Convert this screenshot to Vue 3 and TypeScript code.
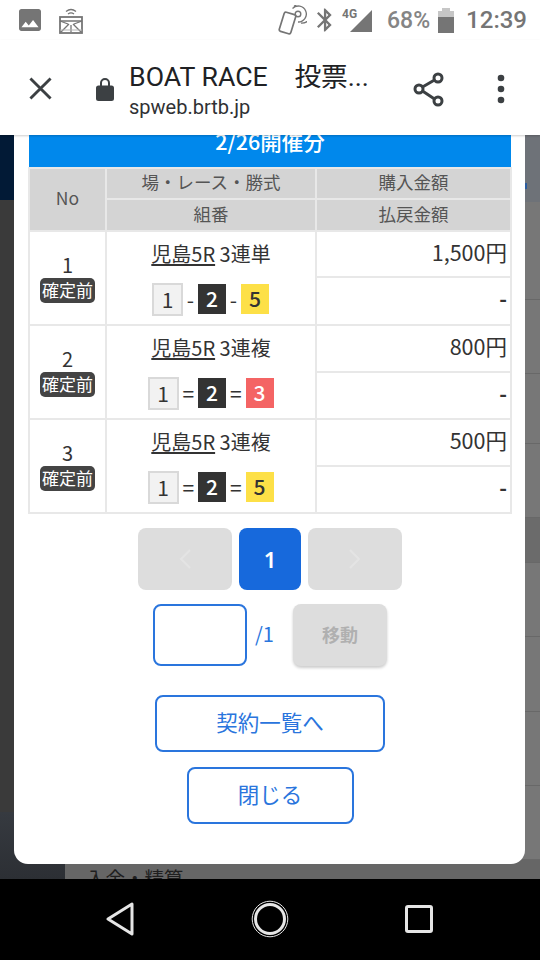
<script setup lang="ts">
interface Bet {
  no: number
  type: string
  sep: string
  last: number
  amount: string
}
const bets: Bet[] = [
  { no: 1, type: '3連単', sep: '-', last: 5, amount: '1,500円' },
  { no: 2, type: '3連複', sep: '=', last: 3, amount: '800円' },
  { no: 3, type: '3連複', sep: '=', last: 5, amount: '500円' },
]
const bgRows = [98, 74, 70, 74, 45, 74, 75, 74, 74]
</script>

<template>
  <div class="screen">
    <header class="status">
      <div class="status-left">
        <svg class="ic-pic" viewBox="3 3 18 18"><path fill="#757575" d="M21 19V5c0-1.1-.9-2-2-2H5c-1.100 0-2 .9-2 2v14c0 1.100.9 2 2 2h14c1.100 0 2-.9 2-2zM8.500 13.500l2.500 3.010L14.500 12l4.500 6H5l3.500-4.500z"/></svg>
        <svg class="ic-cast" viewBox="0 0 24 27" fill="none" stroke="#757575">
          <path d="M7 4.500c3-2.400 7-2.400 10 0M9 7c2-1.500 4-1.500 6 0" stroke-width="1.300"/>
          <rect x="1" y="10" width="22" height="16" stroke-width="1.800"/>
          <path d="M1 14h22" stroke-width="1.500"/>
          <path d="M1 14l8 3M23 14l-8 3M2 25l8-8M22 25l-8-8M12 18v7" stroke-width="1.300"/>
          <path d="M1 23h22" stroke="#b5b5b5" stroke-width="1"/>
        </svg>
      </div>
      <div class="status-right">
        <svg class="ic-nfc" viewBox="0 0 30 30" fill="none" stroke="#757575">
          <rect x="4.500" y="8" width="12" height="20" rx="1.800" transform="rotate(17 10.500 18)" stroke-width="1.700"/>
          <circle cx="21" cy="9" r="2.800" stroke-width="1.400"/>
          <path d="M15.500 3.500A8 8 0 1 1 21 17M17 1.700A10 10 0 1 1 24 18" stroke-width="1.300"/>
        </svg>
        <svg class="ic-bt" viewBox="5 2 13 20"><path fill="#757575" d="M17.710 7.710L12 2h-1v7.590L6.410 5 5 6.410 10.590 12 5 17.590 6.410 19 11 14.410V22h1l5.710-5.710-4.300-4.290 4.300-4.290zM13 5.830l1.880 1.880L13 9.590V5.830zm1.880 10.460L13 18.170v-3.760l1.880 1.880z"/></svg>
        <div class="signal">
          <span class="four-g">4G</span>
          <svg class="ic-signal" viewBox="0 0 22 22"><path fill="#757575" d="M22 0v22H0z"/></svg>
        </div>
        <span class="pct">68%</span>
        <div class="battery"><i class="cap"></i><i class="empty"></i><i class="full"></i></div>
        <span class="clock">12:39</span>
      </div>
    </header>

    <nav class="toolbar">
      <svg class="ic-close" viewBox="0 0 24 24"><path d="M1.500 1.500l21 21M22.500 1.500l-21 21" stroke="#3c4043" stroke-width="3" fill="none"/></svg>
      <svg class="ic-lock" viewBox="0 0 18 24"><path fill="#3c4043" d="M2.500 8.500H4V6a5 5 0 0 1 10 0v2.500h1.500A2.500 2.500 0 0 1 18 11v10.500a2.500 2.500 0 0 1-2.500 2.500h-13A2.500 2.500 0 0 1 0 21.500V11a2.500 2.500 0 0 1 2.500-2.500zM6 8.500h6V6a3 3 0 0 0-6 0z"/></svg>
      <div class="title">
        <div class="title-main">BOAT RACE　投票...</div>
        <div class="title-url">spweb.brtb.jp</div>
      </div>
      <svg class="ic-share" viewBox="0 0 34 36" fill="none" stroke="#3c4043" stroke-width="3">
        <circle cx="26" cy="7" r="4"/>
        <circle cx="7" cy="18" r="4"/>
        <circle cx="26" cy="30" r="4"/>
        <path d="M10.500 16l12-7M10.500 20l12 8"/>
      </svg>
      <svg class="ic-more" viewBox="0 0 8 30"><g fill="#3c4043"><circle cx="4" cy="4" r="3.300"/><circle cx="4" cy="15" r="3.300"/><circle cx="4" cy="26" r="3.300"/></g></svg>
    </nav>

    <main class="web">
      <div class="backdrop">
        <aside class="rail">
          <div class="rail-top"></div>
          <div class="rail-mid"></div>
          <div class="rail-bot"></div>
        </aside>
        <div class="page">
          <div class="page-head"><i class="page-dot"></i></div>
          <div v-for="(h, i) in bgRows" :key="i" class="page-row" :class="{ dim: i === 4 }" :style="{ height: h + 'px' }"></div>
          <div class="page-last">入金・精算</div>
        </div>
      </div>

      <section class="modal">
        <div class="banner">2/26開催分</div>
        <table class="bets">
          <colgroup><col class="c1" /><col class="c2" /><col class="c3" /></colgroup>
          <thead>
            <tr class="h1">
              <th rowspan="2">No</th>
              <th>場・レース・勝式</th>
              <th>購入金額</th>
            </tr>
            <tr class="h2">
              <th>組番</th>
              <th>払戻金額</th>
            </tr>
          </thead>
          <tbody v-for="b in bets" :key="b.no">
            <tr :class="b.no === 1 ? 'r46' : 'r47'">
              <td rowspan="2" class="no">
                <div class="no-num">{{ b.no }}</div>
                <span class="badge">確定前</span>
              </td>
              <td rowspan="2" class="combo">
                <div class="race"><u>児島5R</u> {{ b.type }}</div>
                <div class="boxes" :class="{ wide: b.sep === '=' }">
                  <span class="box white">1</span>
                  <span class="sep">{{ b.sep }}</span>
                  <span class="box black">2</span>
                  <span class="sep">{{ b.sep }}</span>
                  <span class="box" :class="b.last === 5 ? 'yellow' : 'red'">{{ b.last }}</span>
                </div>
              </td>
              <td class="amt">{{ b.amount }}</td>
            </tr>
            <tr :class="b.no === 1 ? 'r48' : 'r47'">
              <td class="amt dash">-</td>
            </tr>
          </tbody>
        </table>

        <div class="pager">
          <button class="pg side" aria-label="前へ">
            <svg class="chev" viewBox="0 0 12 20"><path d="M11 1L2 10l9 9" fill="none" stroke="#e4e4e4" stroke-width="2"/></svg>
          </button>
          <button class="pg current">1</button>
          <button class="pg side" aria-label="次へ">
            <svg class="chev" viewBox="0 0 12 20"><path d="M1 1l9 9-9 9" fill="none" stroke="#e4e4e4" stroke-width="2"/></svg>
          </button>
        </div>

        <div class="jump">
          <input class="jump-input" type="text" />
          <span class="jump-total">/1</span>
          <button class="jump-btn">移動</button>
        </div>

        <button class="outline list">契約一覧へ</button>
        <button class="outline close">閉じる</button>
      </section>
    </main>

    <footer class="navbar">
      <svg class="nav-back" viewBox="0 0 28 34"><path d="M26 2v30L2 17z" fill="none" stroke="#e6e6e6" stroke-width="3" stroke-linejoin="round"/></svg>
      <svg class="nav-home" viewBox="0 0 38 38" fill="none">
        <circle cx="19" cy="19" r="17.800" stroke="#e6e6e6" stroke-width="1"/>
        <circle cx="19" cy="19" r="14.500" stroke="#e6e6e6" stroke-width="3"/>
      </svg>
      <svg class="nav-recent" viewBox="0 0 28 28"><rect x="1.500" y="1.500" width="25" height="25" rx="1.500" fill="none" stroke="#e6e6e6" stroke-width="3"/></svg>
    </footer>
  </div>
</template>

<style scoped>
.screen {
  width: 540px;
  height: 960px;
  display: flex;
  flex-direction: column;
  overflow: hidden;
  font-family: "Noto Sans CJK JP", "Noto Sans", sans-serif;
  color: #333;
}

/* status bar */
.status {
  height: 40px;
  flex: none;
  background: #fff;
  display: flex;
  justify-content: space-between;
  align-items: center;
  position: relative;
  z-index: 3;
}
.status-left { display: flex; align-items: center; margin-left: 19px; gap: 18px; }
.ic-pic { width: 22px; height: 22px; }
.ic-cast { width: 24px; height: 27px; }
.status-right { display: flex; align-items: center; margin-right: 13px; font-family: Roboto, sans-serif; color: #7a7a7a; }
.ic-nfc { width: 30px; height: 30px; margin-right: 10px; }
.ic-bt { width: 15px; height: 24px; margin-right: 10px; }
.signal { position: relative; width: 30px; height: 24px; margin-right: 15px; }
.four-g { position: absolute; left: 0; top: 0; font-size: 12px; line-height: 12px; font-weight: 700; color: #757575; }
.ic-signal { position: absolute; right: 0; bottom: 0; width: 22px; height: 22px; }
.pct { font-size: 23px; margin-right: 8px; font-weight: 500; color: #858585; }
.battery { width: 16px; height: 25px; display: flex; flex-direction: column; align-items: center; margin-right: 12px; }
.battery i { display: block; }
.cap { width: 8px; height: 3px; background: #c6c6c6; }
.empty { width: 16px; height: 6px; background: #c6c6c6; }
.full { width: 16px; height: 16px; background: #757575; }
.clock { font-size: 24px; font-weight: 500; color: #757575; }

/* toolbar */
.toolbar {
  height: 95px;
  flex: none;
  background: #fff;
  display: flex;
  align-items: center;
  position: relative;
  z-index: 3;
  box-shadow: 0 1px 2px rgba(0, 0, 0, 0.2);
}
.ic-close { width: 23px; height: 23px; margin: 2px 0 0 29px; }
.ic-lock { width: 18px; height: 24px; margin: 2px 0 0 44px; }
.title { width: 280px; margin: 5px 0 0 15px; color: #202124; font-family: Roboto, "Noto Sans CJK JP", sans-serif; }
.title-main { font-size: 26.700px; line-height: 34px; white-space: nowrap; }
.title-url { font-size: 20px; line-height: 26px; color: #303134; }
.ic-share { width: 34px; height: 36px; margin: 2px 0 0 3px; }
.ic-more { width: 8px; height: 30px; margin: 2px 0 0 51px; }

/* web area */
.web { flex: 1; position: relative; overflow: hidden; background: #3a3a3a; }
.backdrop { display: flex; height: 100%; }
.rail { width: 65px; display: flex; flex-direction: column; flex: none; }
.rail-top { height: 65px; background: #021a36; }
.rail-mid { height: 612px; background: #3a3a3a; }
.rail-bot { flex: 1; background: linear-gradient(#363a40, #2c2f34); }
.page { flex: 1; background: #777; overflow: hidden; }
.page-head { height: 67px; background: #6e7278; position: relative; }
.page-dot { position: absolute; right: 13px; top: 48px; width: 2px; height: 6px; background: #2b5c9e; }
.page-row { box-sizing: border-box; border-bottom: 1px solid #686868; background: #777; }
.page-row.dim { background: #6b6b6b; }
.page-last { background: #666; padding: 4px 0 0 21px; font-size: 19.500px; line-height: 28px; height: 34px; color: #1f1f1f; }

/* modal */
.modal {
  position: absolute;
  left: 14px;
  width: 511px;
  top: -32px;
  height: 761px;
  box-sizing: border-box;
  padding: 14px 14px 0 15px;
  background: #fff;
  border-radius: 14px;
  display: flex;
  flex-direction: column;
  align-items: center;
}
.banner {
  align-self: stretch;
  height: 50px;
  line-height: 47px;
  flex: none;
  background: #0088ec;
  color: #fff;
  text-align: center;
  font-size: 21.500px;
  font-weight: 500;
}

/* table */
.bets {
  width: 482px;
  flex: none;
  table-layout: fixed;
  border-collapse: collapse;
  background: #fff;
}
.c1 { width: 77px; }
.c2 { width: 210px; }
.c3 { width: 195px; }
.bets th, .bets td { border: 2px solid #e8e8e8; padding: 0; }
.bets th { background: #d4d4d4; font-size: 17.500px; font-weight: 400; color: #555; line-height: 1; padding-bottom: 3px; box-sizing: border-box; }
.h1 { height: 31px; }
.h2 { height: 32px; }
.r46 { height: 46px; }
.r47 { height: 47px; }
.r48 { height: 48px; }
.no { text-align: center; vertical-align: top; }
.no-num { font-size: 20px; line-height: 24px; margin-top: 21px; color: #333; }
.badge {
  display: inline-block;
  width: 55px;
  height: 25px;
  line-height: 24px;
  background: #444;
  color: #fff;
  font-size: 17px;
  border-radius: 5px;
  position: relative;
  top: 1px;
}
.combo { vertical-align: top; text-align: center; }
.race { font-size: 20px; line-height: 26px; margin-top: 9px; color: #333; white-space: nowrap; }
.race u { text-underline-offset: 2px; }
.boxes { display: flex; justify-content: center; align-items: center; margin: 15px 0 0 -1px; height: 34px; }
.box {
  width: 28px;
  height: 30px;
  line-height: 29px;
  text-align: center;
  font-size: 21px;
  font-weight: 500;
  flex: none;
}
.box.white { width: 31px; height: 33px; line-height: 28px; box-sizing: border-box; border: 2px solid #d9d9d9; background: #f2f2f2; color: #333; font-weight: 400; }
.box.black { background: #333; color: #fff; }
.box.yellow { background: #fde047; color: #333; }
.box.red { background: #f46464; color: #fff; }
.sep { width: 15px; text-align: center; font-size: 21px; line-height: 28px; color: #333; }
.wide .sep { width: 19.500px; }
.amt { text-align: right; padding: 0 3px 5px 0 !important; font-size: 21.500px; line-height: 1; color: #333; vertical-align: middle; box-sizing: border-box; }
.dash { font-weight: 700; font-size: 21px; padding-bottom: 5px !important; }

/* pager */
button { font-family: inherit; border: none; padding: 0; }
.pager { display: flex; gap: 7px; margin-top: 14px; flex: none; }
.pg { height: 62px; border-radius: 8px; display: flex; align-items: center; justify-content: center; }
.pg.side { width: 94px; background: #ddd; }
.pg.current { width: 62px; background: #1769dc; color: #fff; font-size: 22px; font-weight: 600; font-family: "Noto Sans", sans-serif; }
.chev { width: 12px; height: 20px; }

.jump { display: flex; align-items: center; margin-top: 14px; flex: none; width: 234px; }
.jump-input { width: 94px; height: 62px; box-sizing: border-box; border: 2px solid #2a75dd; border-radius: 8px; background: #fff; outline: none; }
.jump-total { width: 46px; padding: 0 0 4px 8px; box-sizing: border-box; font-size: 20px; color: #2a75dd; }
.jump-btn { width: 94px; height: 62px; padding-bottom: 3px; background: #ddd; border-radius: 8px; color: #b0b0b0; font-size: 18px; font-weight: 700; box-shadow: 0 2px 3px rgba(0, 0, 0, 0.2); }

.outline { background: #fff; border: 2px solid #2a75dd; border-radius: 8px; color: #2a75dd; font-size: 21.500px; height: 57px; flex: none; padding-bottom: 4px; }
.list { width: 230px; margin-top: 29px; }
.close { width: 167px; margin-top: 15px; }

/* nav bar */
.navbar { height: 81px; flex: none; background: #000; position: relative; z-index: 3; display: flex; align-items: center; padding-bottom: 1px; box-sizing: border-box; }
.nav-back { width: 28px; height: 34px; margin-left: 106px; }
.nav-home { width: 38px; height: 38px; margin-left: 117px; }
.nav-recent { width: 28px; height: 28px; margin-left: 116px; }
</style>
